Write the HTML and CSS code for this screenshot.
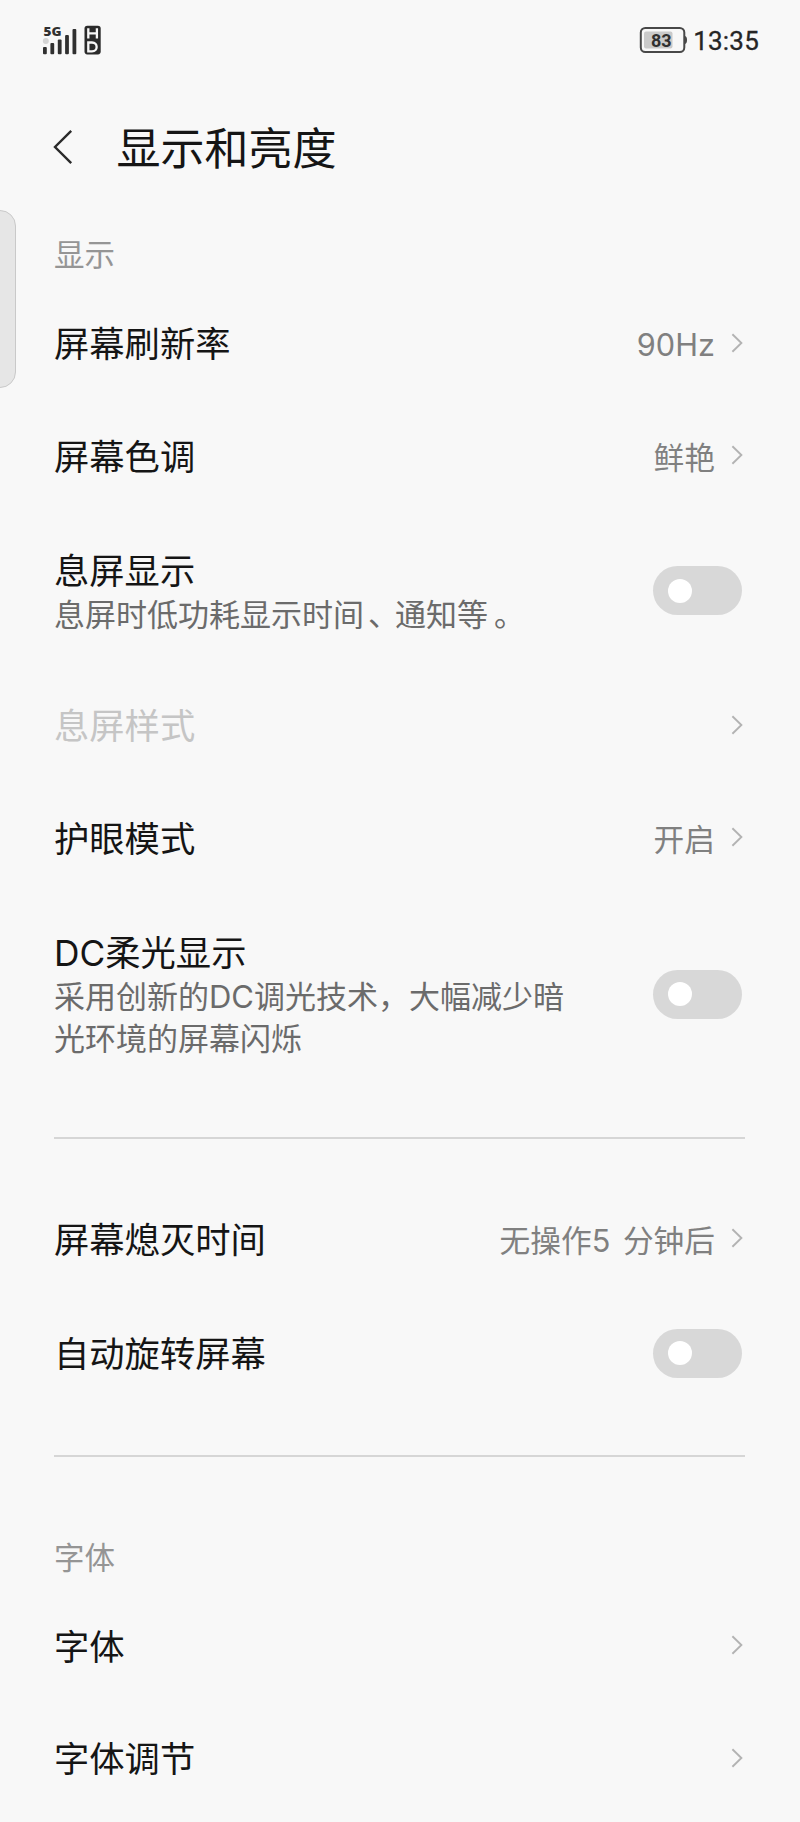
FILE: index.html
```html
<!DOCTYPE html>
<html lang="zh-CN">
<head>
<meta charset="utf-8">
<title>显示和亮度</title>
<link rel="stylesheet" href="styles.css">
</head>
<body>
<svg class="defs" width="0" height="0"><symbol id="chev" viewBox="0 0 12 20"><path d="M1.4 1.2 10.4 10 1.4 18.800" fill="none" stroke="currentColor" stroke-width="1.9"/></symbol></svg>
<div class="edge-handle"></div>
<header class="status">
  <svg class="signal" width="60" height="40" viewBox="42 20 60 40">
    <text class="net" x="43.5" y="36" textLength="18" lengthAdjust="spacingAndGlyphs">5G</text>
    <circle cx="45.8" cy="41" r="3" fill="#d4d4d4"/>
    <g fill="#303030"><rect x="43" y="47" width="3.8" height="7.3" rx="1"/><rect x="50.4" y="43" width="3.8" height="11.3" rx="1"/><rect x="57.8" y="39.5" width="3.8" height="14.8" rx="1"/><rect x="65.1" y="35" width="3.8" height="19.3" rx="1"/><rect x="72.5" y="29" width="3.8" height="25.3" rx="1"/></g>
    <rect x="84.5" y="25.8" width="16.2" height="28.6" rx="2.8" fill="#2b2b2b"/>
    <path d="M88.300 28.300v10.200M96.900 28.300v10.200M88 33.400h9" fill="none" stroke="#f8f8f8" stroke-width="2.300"/>
    <path d="M88.300 42.500h3.700c6.200 0 6.200 8.800 0 8.800h-3.700z" fill="none" stroke="#f8f8f8" stroke-width="2.300"/>
  </svg>
  <div class="status-right">
    <svg width="48" height="28" viewBox="640 26 48 28">
      <rect x="641.8" y="28" width="43.500" height="24" rx="4.500" fill="none" stroke="#484848" stroke-width="2"/>
      <path d="M686 36q2 .5 2 4t-2 4z" fill="#484848"/>
      <rect x="645" y="31.500" width="28.500" height="17" rx="2" fill="#cacaca"/>
      <text class="batt" x="662.300" y="46.700" text-anchor="middle">83</text>
    </svg>
    <span class="clock">13:35</span>
  </div>
</header>
<div class="titlebar">
  <svg width="20" height="36" viewBox="0 0 20 36"><path d="M18.200 1.800 2 18 18.200 34.200" fill="none" stroke="#2a2a2a" stroke-width="2.400"/></svg>
  <h1>显示和亮度</h1>
</div>
<main>
  <h2>显示</h2>
  <div class="row"><div class="name">屏幕刷新率</div><div class="value">90Hz</div><svg class="chev"><use href="#chev"/></svg></div>
  <div class="row"><div class="name">屏幕色调</div><div class="value">鲜艳</div><svg class="chev"><use href="#chev"/></svg></div>
  <div class="row two"><div class="name">息屏显示<p>息屏时低功耗显示时间<span class="comma">、</span>通知等<span class="stop">。</span></p></div><div class="toggle"></div></div>
  <div class="row"><div class="name off">息屏样式</div><svg class="chev"><use href="#chev"/></svg></div>
  <div class="row"><div class="name">护眼模式</div><div class="value">开启</div><svg class="chev"><use href="#chev"/></svg></div>
  <div class="row three"><div class="name">DC柔光显示<p>采用创新的DC调光技术，大幅减少暗<br>光环境的屏幕闪烁</p></div><div class="toggle"></div></div>
  <hr>
  <div class="row"><div class="name">屏幕熄灭时间</div><div class="value">无操作5 分钟后</div><svg class="chev"><use href="#chev"/></svg></div>
  <div class="row rotate"><div class="name">自动旋转屏幕</div><div class="toggle"></div></div>
  <hr class="second">
  <h2 class="fonts">字体</h2>
  <div class="row"><div class="name">字体</div><svg class="chev"><use href="#chev"/></svg></div>
  <div class="row"><div class="name">字体调节</div><svg class="chev"><use href="#chev"/></svg></div>
</main>
</body>
</html>
```
FILE: styles.css
```css
* { box-sizing: border-box; }
body { margin: 0; height: 1822px; overflow: hidden; background: #f8f8f8; color: #151515; font-family: Inter, "Noto Sans CJK SC", sans-serif; font-weight: 400; }
.defs { position: absolute; }
.edge-handle { position: absolute; left: -2px; top: 210px; width: 18px; height: 178px; background: #e6e6e6; border: 1.5px solid #c9c9c9; border-radius: 0 16px 16px 0; }
.status { height: 82px; padding: 0 41px 0 42px; display: flex; justify-content: space-between; align-items: center; }
.signal { margin-bottom: 2px; }
.net { font: 800 12px "Open Sans", sans-serif; fill: #303030; }
.batt { font: 700 18px Roboto, sans-serif; fill: #303030; }
.status-right { display: flex; align-items: center; gap: 6px; }
.status-right svg { margin-bottom: 2px; }
.clock { font: 400 26px/30px Roboto, sans-serif; color: #252525; letter-spacing: .2px; -webkit-text-stroke: .3px #252525; }
.titlebar { height: 132px; padding-left: 53px; display: flex; align-items: center; gap: 43.5px; }
.titlebar svg { margin-bottom: 2px; }
h1 { margin: 2px 0 0; font-size: 44px; line-height: 60px; font-weight: 400; }
main { padding: 0 55px 0 54px; }
h2 { margin: 0; height: 75px; padding-top: 20px; font-size: 30.5px; line-height: 42px; font-weight: 400; color: #959595; }
.row { height: 112.5px; display: flex; align-items: center; }
.row.two { height: 157px; }
.row.three { height: 200px; }
.row.rotate { height: 116px; }
.name { flex: 1; font-size: 35.3px; line-height: 44px; white-space: nowrap; }
.name.off { color: #c5c5c5; }
.name p { margin: 0; font-size: 31px; line-height: 42px; color: #6b6b6b; }
.comma { padding-left: 4px; letter-spacing: -4px; }
.stop { padding-left: 6px; }
.value { font-size: 30.7px; line-height: 42px; color: #808080; white-space: pre; word-spacing: 4px; }
.chev { width: 12px; height: 20px; margin: 0 2px 5px 16px; color: #b3b3b3; }
.toggle { width: 89px; height: 49px; margin: 0 3px 4px 0; padding: 12.5px 15px; border-radius: 25px; background: #d8d8d8; }
.toggle::before { content: ""; display: block; width: 24px; height: 24px; border-radius: 50%; background: #fff; }
hr { margin: 41px 0 46px; border: 0; height: 1.5px; background: #d6d6d6; }
hr.second { margin: 42px 0 45px; }
h2.fonts { height: 90px; padding-top: 35px; }
```
